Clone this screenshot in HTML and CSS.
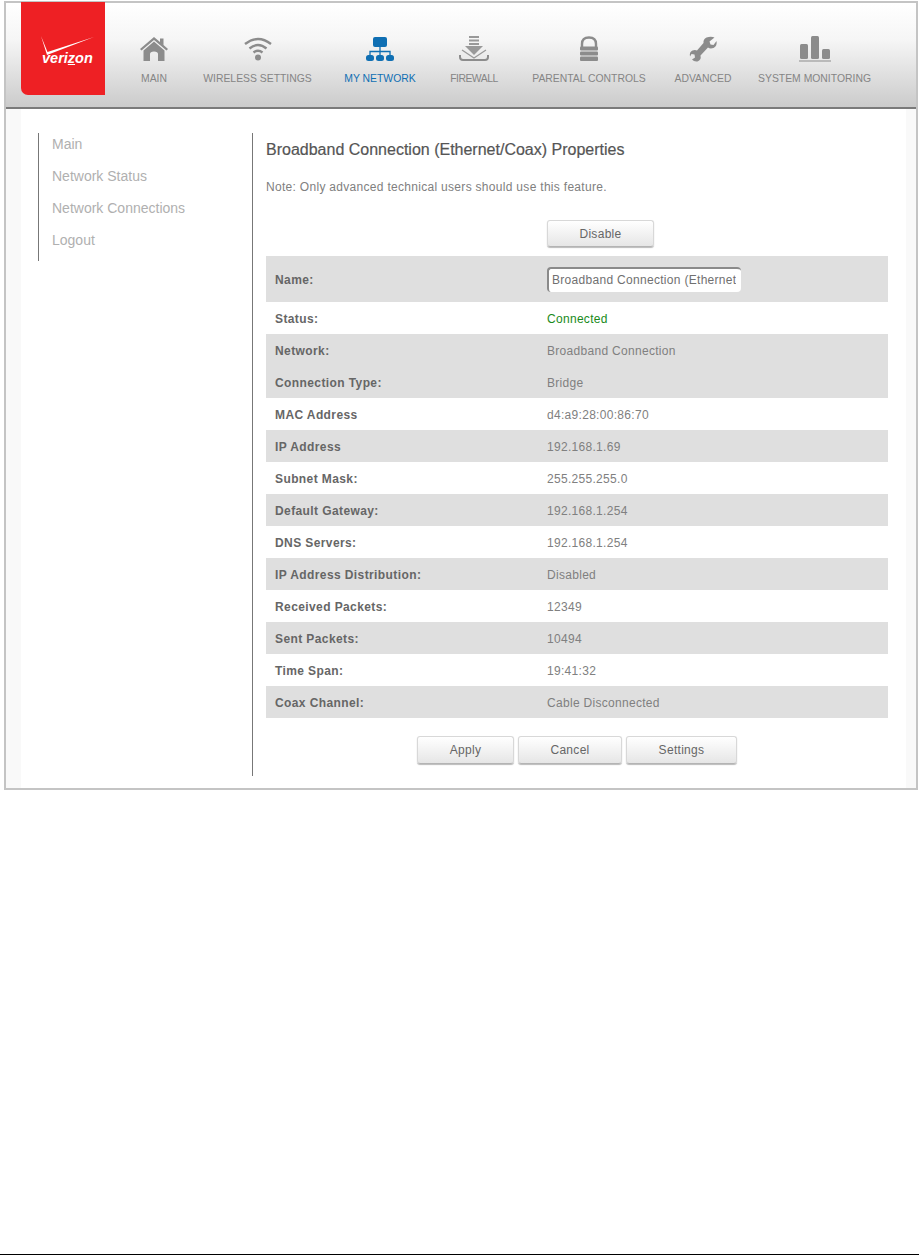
FILE: index.html
```html
<!DOCTYPE html>
<html lang="en">
<head>
  <meta charset="UTF-8" />
  <title>Broadband Connection (Ethernet/Coax) Properties</title>
  <link rel="stylesheet" href="styles.css">
</head>
<body>
  <div class="frame">
    <div class="header">
      <div class="logo">
        <svg class="logo-check" width="56" height="22" viewBox="0 0 56 22"><path d="M1 1 L7 20 L54 2 L7.5 17 Z" fill="#fff"/></svg>
        <div class="logo-text">veri<span class="logo-z">z</span>on</div>
      </div>
      <div class="nav">
        <div class="nav-item nav-main">
          <svg width="30" height="26" viewBox="0 0 30 26"><path d="M1 13 L15 1 L21 6 V2.500 H24.500 V9 L29 13 L27.500 14.500 L15 4 L2.500 14.500 Z" fill="#8c8c8c"/><path d="M4.500 14.500 L15 5.500 L25.500 14.500 V25 H19 V18 Q19 15.500 15 15.500 Q11 15.500 11 18 V25 H4.500 Z" fill="#8c8c8c"/></svg>
          <span>MAIN</span>
        </div>
        <div class="nav-item nav-wireless">
          <svg width="30" height="26" viewBox="0 0 30 26"><g fill="none" stroke="#8c8c8c" stroke-width="2.400"><path d="M2 8 Q15 -2 28 8"/><path d="M6.500 12.500 Q15 5.500 23.500 12.500"/><path d="M10.500 16.500 Q15 13 19.500 16.500"/></g><circle cx="15" cy="21.500" r="3" fill="#8c8c8c"/></svg>
          <span>WIRELESS SETTINGS</span>
        </div>
        <div class="nav-item nav-network active">
          <svg width="30" height="26" viewBox="0 0 30 26"><rect x="8" y="1" width="14" height="10" rx="2" fill="#0f6fb3"/><path d="M15 11 V20 M5 20 V15.500 H25 V20" fill="none" stroke="#0f6fb3" stroke-width="1.300"/><rect x="1" y="19" width="8" height="6" rx="2.500" fill="#0f6fb3"/><rect x="11" y="19" width="8" height="6" rx="2.500" fill="#0f6fb3"/><rect x="21" y="19" width="8" height="6" rx="2.500" fill="#0f6fb3"/></svg>
          <span>MY NETWORK</span>
        </div>
        <div class="nav-item nav-firewall">
          <svg width="32" height="26" viewBox="0 0 32 26"><g fill="#999"><rect x="11" y="0" width="10" height="2"/><rect x="11" y="3.500" width="10" height="2"/><rect x="11" y="7" width="10" height="2"/><path d="M7 10 H25 L16 19 Z"/></g><path d="M4 14 L16 22 L28 14" fill="none" stroke="#999" stroke-width="1.200"/><path d="M2 19 V21 Q2 24 5 24 H27 Q30 24 30 21 V19" fill="none" stroke="#8c8c8c" stroke-width="2"/></svg>
          <span>FIREWALL</span>
        </div>
        <div class="nav-item nav-parental">
          <svg width="30" height="26" viewBox="0 0 30 26"><path d="M8 11 V8 Q8 1.500 15 1.500 Q22 1.500 22 8 V11" fill="none" stroke="#8c8c8c" stroke-width="2.400"/><g fill="#8c8c8c"><rect x="6" y="10.500" width="18" height="4" rx="1"/><rect x="6" y="15.500" width="18" height="4" rx="1"/><rect x="6" y="20.500" width="18" height="4.500" rx="1"/></g></svg>
          <span>PARENTAL CONTROLS</span>
        </div>
        <div class="nav-item nav-advanced">
          <svg width="30" height="26" viewBox="0 0 30 26"><path d="M26.500 1.500 L21.500 5.500 L22.500 8.500 L25.500 9 L28.500 5 Q29.500 10 25.500 12 Q22 13 20 11.500 L12.500 19.500 Q13.500 24 9.500 25.500 Q6 26 4 23.500 L7 21.500 L6.500 18.500 L3.500 18 L2 20.500 Q1 16 4.500 14.500 Q7 13.500 9 14.500 L15.500 7 Q15 3 18.500 1.500 Q23 0 26.500 1.500 Z" fill="#8c8c8c"/></svg>
          <span>ADVANCED</span>
        </div>
        <div class="nav-item nav-system">
          <svg width="32" height="26" viewBox="0 0 32 26"><g fill="#8c8c8c"><rect x="1" y="8" width="8" height="15" rx="1.500"/><rect x="12" y="0" width="8" height="23" rx="1.500"/><rect x="23" y="13" width="8" height="10" rx="1.500"/></g><rect x="0" y="24.500" width="32" height="1" fill="#8c8c8c"/></svg>
          <span>SYSTEM MONITORING</span>
        </div>
      </div>
    </div>

    <div class="body">
      <div class="sidebar">
        <a>Main</a>
        <a>Network Status</a>
        <a>Network Connections</a>
        <a>Logout</a>
      </div>
      <div class="content">
        <h1>Broadband Connection (Ethernet/Coax) Properties</h1>
        <p class="note">Note: Only advanced technical users should use this feature.</p>
        <div class="top-action">
          <button class="btn btn-disable">Disable</button>
        </div>
        <div class="rows">
          <div class="row row-name shade"><div class="label">Name:</div><input class="name-input" type="text" value="Broadband Connection (Ethernet/Coax)"></div>
          <div class="row"><div class="label">Status:</div><div class="value connected">Connected</div></div>
          <div class="row shade"><div class="label">Network:</div><div class="value">Broadband Connection</div></div>
          <div class="row shade"><div class="label">Connection Type:</div><div class="value">Bridge</div></div>
          <div class="row"><div class="label">MAC Address</div><div class="value">d4:a9:28:00:86:70</div></div>
          <div class="row shade"><div class="label">IP Address</div><div class="value">192.168.1.69</div></div>
          <div class="row"><div class="label">Subnet Mask:</div><div class="value">255.255.255.0</div></div>
          <div class="row shade"><div class="label">Default Gateway:</div><div class="value">192.168.1.254</div></div>
          <div class="row"><div class="label">DNS Servers:</div><div class="value">192.168.1.254</div></div>
          <div class="row shade"><div class="label">IP Address Distribution:</div><div class="value">Disabled</div></div>
          <div class="row"><div class="label">Received Packets:</div><div class="value">12349</div></div>
          <div class="row shade"><div class="label">Sent Packets:</div><div class="value">10494</div></div>
          <div class="row"><div class="label">Time Span:</div><div class="value">19:41:32</div></div>
          <div class="row shade"><div class="label">Coax Channel:</div><div class="value">Cable Disconnected</div></div>
        </div>
        <div class="actions">
          <button class="btn btn-apply">Apply</button>
          <button class="btn btn-cancel">Cancel</button>
          <button class="btn btn-settings">Settings</button>
        </div>
      </div>
    </div>
  </div>
  <div class="page-line"></div>
</body>
</html>
```

FILE: styles.css
```css
* {
  box-sizing: border-box;
}

body {
  margin: 0;
  background: #fff;
  font-family: "Liberation Sans", Arial, sans-serif;
  color: #666;
}

.frame {
  width: 914px;
  height: 789px;
  margin: 1px 0 0 4px;
  border: 2px solid #c4c4c4;
  background: #f9f9f9;
}

.header {
  display: flex;
  height: 106px;
  padding-left: 15px;
  background: linear-gradient(#fff 0%, #f6f6f6 35%, #cbcbcb 100%);
  border-bottom: 2px solid #7a7a7a;
}

.logo {
  position: relative;
  flex: none;
  width: 84px;
  height: 93px;
  margin-top: -1px;
  background: #ee2024;
  border-bottom-left-radius: 7px;
  color: #fff;
}

.logo-check {
  position: absolute;
  left: 19px;
  top: 33px;
}

.logo-text {
  position: absolute;
  left: 21px;
  top: 48px;
  font-size: 14.5px;
  font-weight: bold;
  font-style: italic;
  line-height: 16px;
}

.logo-z {
  text-decoration: underline;
}

.nav {
  flex: 1;
  display: flex;
  padding-top: 33px;
}

.nav-item {
  display: flex;
  flex: none;
  flex-direction: column;
  align-items: center;
  font-size: 10.4px;
  color: #858585;
  white-space: nowrap;
}

.nav-item svg {
  display: block;
  margin-bottom: 10px;
}

.nav-item span {
  line-height: 14px;
}

.nav-main {
  width: 40px;
  margin-left: 29px;
}

.nav-wireless {
  width: 111px;
  margin-left: 28px;
}

.nav-network {
  width: 72px;
  margin-left: 31px;
}

.nav-firewall {
  width: 48px;
  margin-left: 34px;
}

.nav-firewall span {
  letter-spacing: -0.5px;
}

.nav-parental {
  width: 118px;
  margin-left: 32px;
}

.nav-advanced {
  width: 60px;
  margin-left: 25px;
}

.nav-system {
  width: 113px;
  margin-left: 25px;
}

.nav-item.active {
  color: #0f6fb3;
}

.body {
  display: flex;
  align-items: flex-start;
  height: 679px;
  margin: 0 10px 0 15px;
  padding: 24px 0 0 17px;
  background: #fff;
}

.sidebar {
  display: flex;
  flex: none;
  flex-direction: column;
  width: 214px;
  height: 128px;
  padding-left: 13px;
  border-left: 1px solid #777;
  font-size: 14px;
  color: #b0b0b0;
}

.sidebar a {
  height: 32px;
  line-height: 22px;
}

.content {
  flex: none;
  width: 636px;
  height: 643px;
  padding-left: 13px;
  border-left: 1px solid #777;
}

h1 {
  margin: 8px 0 0;
  font-size: 16px;
  line-height: 18px;
  font-weight: normal;
  -webkit-text-stroke: 0.2px #555;
  color: #555;
}

.note {
  margin: 20px 0 0;
  font-size: 12px;
  line-height: 16px;
  letter-spacing: 0.3px;
  color: #808080;
}

.top-action {
  display: flex;
  height: 36px;
  margin-top: 25px;
  padding-left: 281px;
}

.btn {
  height: 28px;
  padding: 0;
  border: 1px solid #d8d8d8;
  border-bottom-color: #b4b4b4;
  border-radius: 3px;
  background: linear-gradient(#fff, #e6e6e6);
  box-shadow: 0 1px 1px #bbb;
  font-family: inherit;
  font-size: 12px;
  letter-spacing: 0.3px;
  color: #666;
}

.btn-disable {
  width: 107px;
  height: 27px;
}

.rows {
  width: 622px;
  font-size: 12px;
  letter-spacing: 0.3px;
}

.row {
  display: flex;
  align-items: center;
  height: 32px;
  padding: 2px 0 0 9px;
}

.row-name {
  height: 46px;
  padding-top: 0;
}

.row-name .label {
  margin-top: 2px;
}

.shade {
  background: #dfdfdf;
}

.label {
  width: 272px;
  flex: none;
  font-weight: bold;
  letter-spacing: 0.4px;
  color: #666;
}

.value {
  color: #808080;
}

.connected {
  color: #1a8a1a;
}

.name-input {
  width: 194px;
  height: 25px;
  padding: 0 5px 0 3px;
  border: none;
  border-top: 2px solid #8a8a8a;
  border-left: 2px solid #8a8a8a;
  border-radius: 4px;
  background: #fff;
  font-family: inherit;
  font-size: 12px;
  letter-spacing: 0.3px;
  color: #707070;
  outline: none;
}

.actions {
  display: flex;
  gap: 4px;
  margin-top: 18px;
  padding-left: 151px;
}

.btn-apply {
  width: 97px;
}

.btn-cancel {
  width: 104px;
}

.btn-settings {
  width: 111px;
}

.page-line {
  height: 1px;
  margin-top: 464px;
  background: #000;
}
```
